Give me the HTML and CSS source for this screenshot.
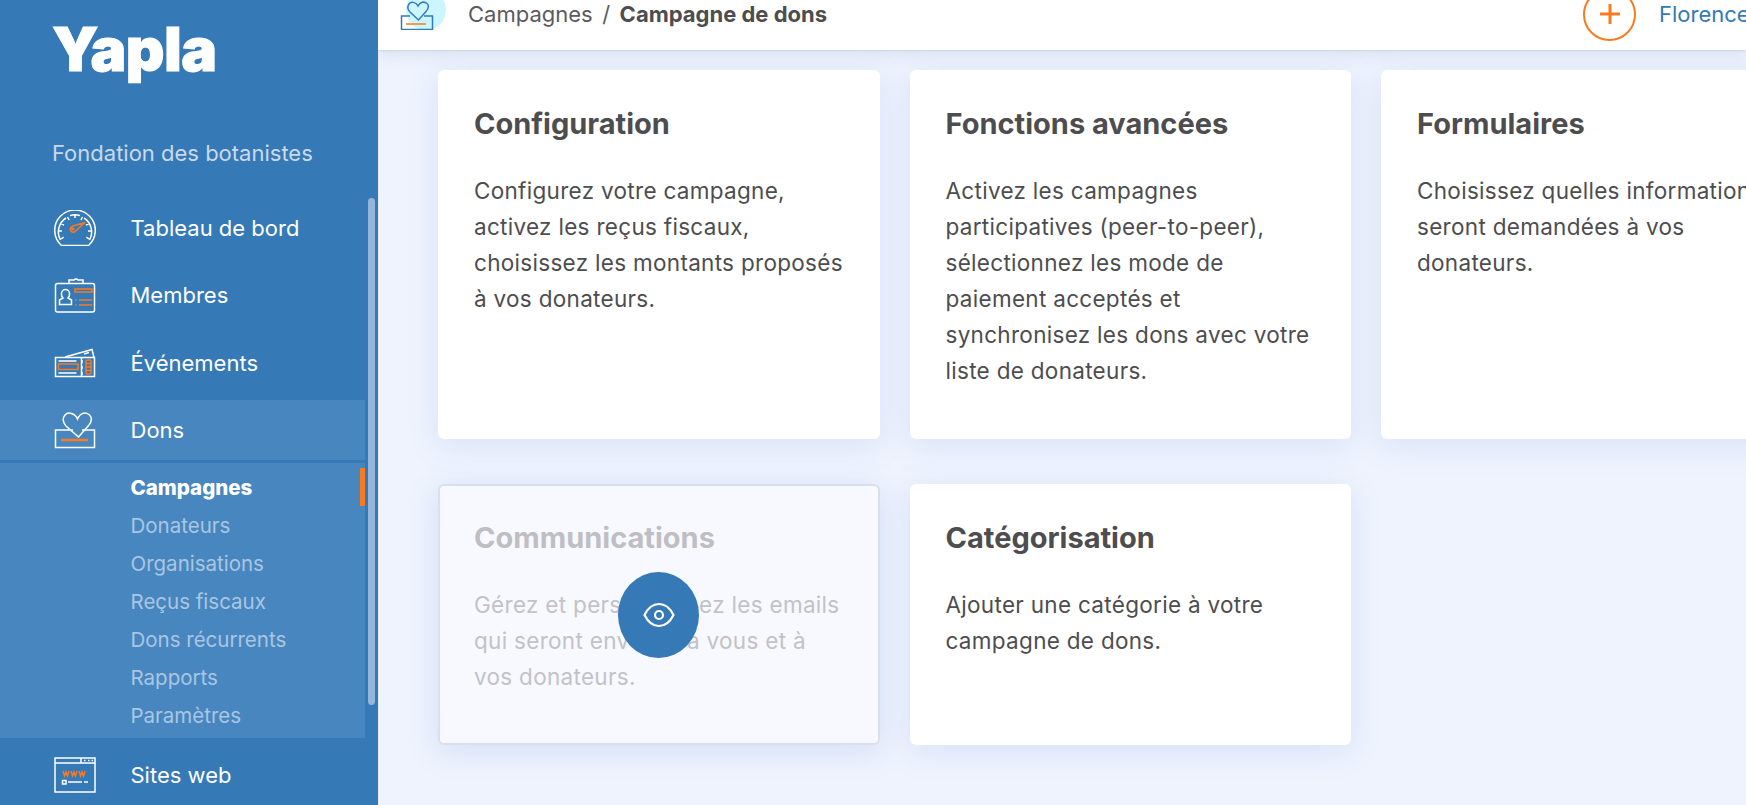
FILE: index.html
```html
<!DOCTYPE html>
<html lang="fr">
<head>
<meta charset="utf-8">
<title>Yapla</title>
<link rel="stylesheet" href="styles.css">
</head>
<body>
<div class="app">
  <aside class="sidebar">
    <div class="logo">Yapla</div>
    <div class="org">Fondation des botanistes</div>
    <nav class="nav">
      <a class="nav-item">
        <svg class="nav-icon" viewBox="0 0 42 36"><path class="w" d="M7.5 35.5A20.3 20.3 0 1 1 34.5 35.5Z"/><path class="w" d="M6.5 30A16.5 16.5 0 0 1 12 8M16 5.6A16.5 16.5 0 0 1 26 5.6M30 8A16.5 16.5 0 0 1 35.5 30M4.5 21H8M7 13.5l3 1.6M13.5 7l1.6 3M21 4.5V8M28.5 7l-1.6 3M35 13.5l-3 1.6M37.5 21H34M7 29l2.6-1.8M35 29l-2.6-1.8"/><path class="o" d="M18 16.2L31 12.5 21.5 21M18.5 16.5a2.9 2.9 0 1 0 3 4.5"/><circle class="o" cx="18.8" cy="19" r="1"/></svg>
        <span>Tableau de bord</span>
      </a>
      <a class="nav-item">
        <svg class="nav-icon" viewBox="0 0 42 36"><rect class="w" x="1.5" y="6.500" width="39" height="28.500" rx="2"/><path class="w" d="M15 6.500V3h5a2.500 2.500 0 0 1 4 0h5v3.500"/><path class="w" d="M9 21a4.500 4.500 0 0 1-1.500-3.500v-1a4 4 0 0 1 8 0v1A4.500 4.500 0 0 1 14 21l3.500 2v4.500H5.500V23z"/><rect class="o" x="21" y="12" width="17" height="3"/><path class="o" d="M21 23h1.500M25 23h13M21 28h1.500M25 28h13"/></svg>
        <span>Membres</span>
      </a>
      <a class="nav-item">
        <svg class="nav-icon" viewBox="0 0 42 30"><path class="w" d="M1.500 9.500h39v19h-39zM27.500 9.500v19"/><path class="w" d="M11 9l27-7.500 2 8M30 6l5-1.500"/><path class="w" d="M4.500 13h18M4.500 25h18M28 12v3m0 3v3m0 3v3"/><rect class="o" x="4.500" y="16" width="19.500" height="5.500"/><rect class="o" x="32" y="12" width="5" height="14" rx="1.500"/><path class="o" d="M32 15.500h5M32 19h5M32 22.500h5"/></svg>
        <span>Événements</span>
      </a>
      <a class="nav-item active">
        <svg class="nav-icon tall" viewBox="0 0 42 38"><path class="w" d="M19 19H1.500v17.500h39V19H28"/><path class="w" d="M23.500 8C21 2 14 0.500 11 4 8 7.500 9.500 12 12 15L24.500 26 35 14C38 10 38 6 35 3.500 31 0.500 26 2 23.500 8z"/><path class="o thick" d="M7 29h27"/></svg>
        <span>Dons</span>
      </a>
      <div class="subnav">
        <a class="sub-item current">Campagnes</a>
        <a class="sub-item">Donateurs</a>
        <a class="sub-item">Organisations</a>
        <a class="sub-item">Reçus fiscaux</a>
        <a class="sub-item">Dons récurrents</a>
        <a class="sub-item">Rapports</a>
        <a class="sub-item">Paramètres</a>
      </div>
      <a class="nav-item last">
        <svg class="nav-icon" viewBox="0 0 42 36"><path class="w" d="M1 1h40v34H1zM1 6h40M27 1v5"/><path class="w" d="M30 3.500h1.500M34 3.500h1.500M37.500 3.500h1.500"/><path class="o" d="M9 14l1.500 5 1.500-4 1.500 4 1.500-5M17 14l1.500 5 1.500-4 1.500 4 1.500-5M25 14l1.500 5 1.500-4 1.500 4 1.500-5"/><rect class="w" x="8.500" y="23.500" width="3.500" height="3.500"/><path class="w" d="M14 25h14M30 25h4"/></svg>
        <span>Sites web</span>
      </a>
    </nav>
    <div class="scrollbar"></div>
  </aside>
  <main class="main">
    <header class="topbar">
      <div class="crumb-icon">
        <svg viewBox="0 0 46 30"><circle class="bubble" cx="26" cy="10" r="20"/><path class="b" d="M10 16H1.500v13.500h31V16H24"/><path class="b" d="M18 6C16 2 11 1 9 4 7 7 8 10 10 12L18.500 20 26 11.500C29 8 29 5 27 3.500 24 1 20 2 18 6z"/><path class="o" d="M6 24h20"/></svg>
      </div>
      <div class="crumbs"><span>Campagnes</span><span class="sep">/</span><strong>Campagne de dons</strong></div>
      <div class="user">
        <div class="add"><svg viewBox="0 0 24 24"><path d="M12 2v20M2 12h20"/></svg></div>
        <span class="user-name">Florence</span>
      </div>
    </header>
    <section class="cards">
      <article class="card">
        <h2>Configuration</h2>
        <p>Configurez votre campagne,<br>activez les reçus fiscaux,<br>choisissez les montants proposés<br>à vos donateurs.</p>
      </article>
      <article class="card">
        <h2>Fonctions avancées</h2>
        <p>Activez les campagnes<br>participatives (peer-to-peer),<br>sélectionnez les mode de<br>paiement acceptés et<br>synchronisez les dons avec votre<br>liste de donateurs.</p>
      </article>
      <article class="card">
        <h2>Formulaires</h2>
        <p>Choisissez quelles informations<br>seront demandées à vos<br>donateurs.</p>
      </article>
      <article class="card hovered">
        <h2>Communications</h2>
        <p>Gérez et personnalisez les emails<br>qui seront envoyés à vous et à<br>vos donateurs.</p>
        <div class="eye"><svg viewBox="0 0 32 26"><path d="M1.500 13C5 6 10 2 16 2s11 4 14.500 11C27 20 22 24 16 24S5 20 1.500 13z"/><circle cx="16" cy="13" r="4"/></svg></div>
      </article>
      <article class="card">
        <h2>Catégorisation</h2>
        <p>Ajouter une catégorie à votre<br>campagne de dons.</p>
      </article>
    </section>
  </main>
</div>
</body>
</html>
```

FILE: styles.css
```css
* { box-sizing: border-box; }
html, body { margin: 0; height: 100%; overflow: hidden; }
body { font-family: "Inter", "Open Sans", sans-serif; background: #eef3fd; color: #4d4d4f; }
.app { display: flex; width: 1746px; height: 805px; overflow: hidden; }

/* Sidebar */
.sidebar { position: relative; flex: 0 0 378px; background: #3579b6; color: #fff; padding-top: 14px; box-shadow: 1px 0 0 #e8edf6; }
.logo { font-weight: 900; font-size: 60px; line-height: 70px; letter-spacing: -0.500px; padding-left: 52px; -webkit-text-stroke: 1px #fff; }
.org { margin-top: 53px; padding-left: 52px; font-size: 22px; line-height: 32px; color: #c8daec; }
.nav { margin-top: 25px; width: 365px; display: flex; flex-direction: column; }
.nav-item { display: flex; align-items: center; height: 67.500px; padding-left: 54px; font-size: 22px; }
.nav-item span { margin-left: 34.500px; }
.nav-icon { width: 42px; height: 36px; flex: none; }
.nav-icon.tall { height: 38px; }
.nav-item.active { height: 60px; background: #4886bf; margin-top: 3px; }
.nav-item.last { margin-top: 4px; }
.subnav { margin-top: 3px; height: 275px; padding: 6px 0 0 130.500px; background: #4886bf; display: flex; flex-direction: column; position: relative; }
.sub-item { font-size: 20.500px; line-height: 38px; color: #a9c6e2; }
.sub-item.current { color: #fff; font-weight: 800; }
.subnav::before { content: ""; position: absolute; right: 0; top: 5px; width: 5px; height: 38px; background: #f97a1f; }
.scrollbar { position: absolute; left: 368px; top: 198px; width: 7px; height: 507px; border-radius: 4px; background: #93b6d9; }

svg path, svg rect, svg circle { fill: none; stroke-width: 1.500; }
.w { stroke: #fff; }
.o { stroke: #f97a1f; }
.o.thick { stroke-width: 2.500; }
.b { stroke: #3579b6; }
svg .bubble { fill: #ccf6ff; stroke: none; }

/* Main */
.main { flex: 1; min-width: 0; overflow: hidden; }
.topbar { position: relative; z-index: 1; height: 50px; background: #fff; display: flex; align-items: flex-start; padding-left: 22px; box-shadow: 0 1px 2px #cfd8e6, 0 4px 16px rgba(120,140,190,.18); }
.crumb-icon { width: 46px; height: 30px; flex: none; }
.crumb-icon svg { display: block; width: 46px; height: 30px; }
.crumbs { margin-left: 22px; font-size: 22px; line-height: 28px; color: #5b5b5d; white-space: nowrap; }
.sep { margin: 0 9.500px; }
.crumbs strong { font-weight: 700; color: #4d4d4f; }
.user { margin-left: auto; display: flex; align-items: center; height: 28px; }
.add { width: 53px; height: 53px; border: 2px solid #f97a1f; border-radius: 50%; display: flex; align-items: center; justify-content: center; flex: none; }
.add svg { width: 24px; height: 24px; }
.add path { stroke: #f97a1f; stroke-width: 3; }
.user-name { margin-left: 23px; width: 87px; overflow: hidden; font-size: 22px; color: #3579b6; }

.cards { display: grid; grid-template-columns: repeat(3, 441.500px); grid-template-rows: 369px 261px; gap: 45px 30px; padding: 20px 0 0 60px; }
.card { position: relative; background: #fff; border-radius: 6px; padding: 34px 36px; box-shadow: 0 6px 30px rgba(120,150,220,.18); }
.card h2 { margin: 0; font-size: 29px; line-height: 40px; font-weight: 650; color: #4d4d4f; }
.card p { margin: 29px 0 0; font-size: 22.500px; line-height: 36px; letter-spacing: .3px; color: #4d4d4f; white-space: nowrap; }
.card.hovered { background: #f7f9fe; box-shadow: 0 0 0 2px #d8e0ee inset, 0 6px 30px rgba(120,150,220,.22); }
.card.hovered h2 { color: #bebec4; }
.card.hovered p { color: #c2c2c8; }
.eye { position: absolute; left: 50%; top: 50%; width: 81px; height: 86px; margin: -43px 0 0 -40.500px; border-radius: 50%; background: #3579b6; display: flex; align-items: center; justify-content: center; }
.eye svg { width: 32px; height: 26px; }
.eye path, .eye circle { stroke: #fff; stroke-width: 2.200; }
```
